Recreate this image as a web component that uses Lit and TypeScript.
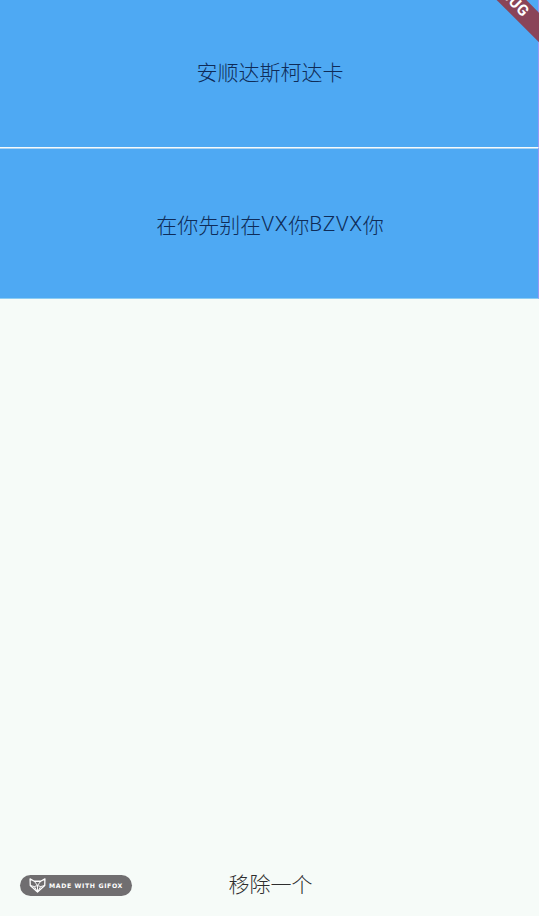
import { LitElement, html, css } from "lit";
import { customElement } from "lit/decorators.js";

@customElement("app-root")
export class AppRoot extends LitElement {
  static styles = css`
    :host {
      display: flex;
      flex-direction: column;
      position: relative;
      width: 539px;
      height: 916px;
      overflow: hidden;
      background: #f6fbf8;
      font-family: "Roboto", "Noto Sans CJK SC", sans-serif;
    }
    .list { display: flex; flex-direction: column; }
    .row {
      height: 147px;
      padding: 0 0 6px 2px;
      box-sizing: border-box;
      background: #4ea9f3;
      border-right: 1px solid #9a97f2;
      color: #0f2c58;
      font-size: 21px;
      font-weight: 300;
      display: flex;
      align-items: center;
      justify-content: center;
    }
    .row + .row {
      height: 152px;
      border-top: 1px solid #f6fbfb;
      box-shadow: inset 0 1px 0 #a9d3f3;
      border-bottom: 1px solid #8ccdf3;
      padding: 1px 0 0 2px;
    }
    .lat { letter-spacing: 0.55px; }
    .spacer { flex: 1; }
    .bottom {
      height: 66px;
      padding-left: 2px;
      display: flex;
      align-items: center;
      justify-content: center;
      font-size: 21px;
      font-weight: 300;
      color: #2e2e2e;
    }
    .ribbon {
      position: absolute;
      left: 407.5px;
      top: -14.5px;
      width: 200px;
      height: 21px;
      transform: rotate(45deg);
      background: #8a4458;
      color: #fff;
      font: 700 15.3px/21px "Roboto", sans-serif;
      text-align: center;
      letter-spacing: 0.5px;
    }
    .gifox {
      position: absolute;
      left: 20px;
      top: 875px;
      width: 112px;
      height: 21px;
      border-radius: 11px;
      background: #706e70;
      color: #fff;
      display: flex;
      align-items: center;
      gap: 3px;
      padding-left: 9px;
      box-sizing: border-box;
      font: 700 6.2px "DejaVu Sans", sans-serif;
      letter-spacing: 0.63px;
      white-space: nowrap;
    }
    svg { display: block; flex: none; }
  `;

  render() {
    return html`
      <div class="list">
        <div class="row">安顺达斯柯达卡</div>
        <div class="row">在你先别在<span class="lat">VX</span>你<span class="lat">BZVX</span>你</div>
      </div>
      <div class="spacer"></div>
      <div class="bottom">移除一个</div>
      <div class="ribbon">DEBUG</div>
      <div class="gifox">
        <svg width="17" height="15" viewBox="0 0 16 14" fill="none" stroke="#fff" stroke-width="1.2" stroke-linejoin="round">
          <path d="M1 .8 L5 3 H11 L15 .8 L14.8 7 L8 13.2 L1.2 7 Z" />
          <path d="M5 3 L8 7 L11 3 M1.2 7 L5 8 L8 7 L11 8 L14.8 7 M8 7 V13 M5 8 L8 13 L11 8" stroke-width="0.9" />
        </svg>
        <span>MADE WITH GIFOX</span>
      </div>
    `;
  }
}
